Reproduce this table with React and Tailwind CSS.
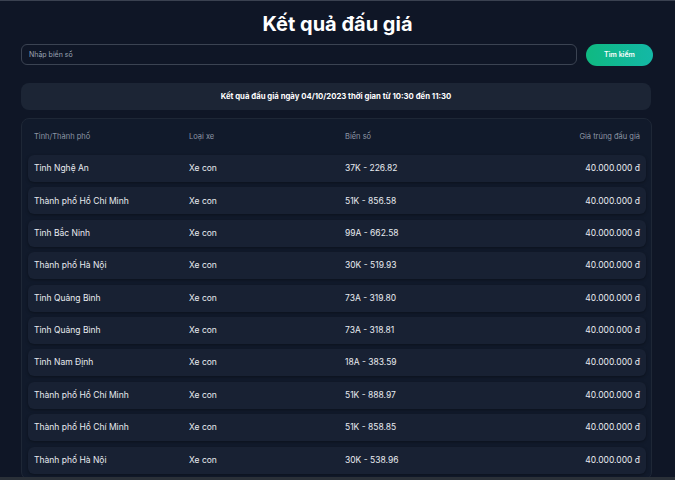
const ROWS = [
  ['Tỉnh Nghệ An', 'Xe con', '37K - 226.82'],
  ['Thành phố Hồ Chí Minh', 'Xe con', '51K - 856.58'],
  ['Tỉnh Bắc Ninh', 'Xe con', '99A - 662.58'],
  ['Thành phố Hà Nội', 'Xe con', '30K - 519.93'],
  ['Tỉnh Quảng Bình', 'Xe con', '73A - 319.80'],
  ['Tỉnh Quảng Bình', 'Xe con', '73A - 318.81'],
  ['Tỉnh Nam Định', 'Xe con', '18A - 383.59'],
  ['Thành phố Hồ Chí Minh', 'Xe con', '51K - 888.97'],
  ['Thành phố Hồ Chí Minh', 'Xe con', '51K - 858.85'],
  ['Thành phố Hà Nội', 'Xe con', '30K - 538.96'],
]

export default function App() {
  return (
    <div className="h-[480px] overflow-hidden bg-[#0f1626] border-t border-b-[3px] border-t-[#3a4150] border-b-[#2a3038] font-['Inter',sans-serif] text-white">
      <div className="px-[21px] pt-[10px]">
        <h1 className="text-center text-[20px] leading-[26px] font-bold">Kết quả đấu giá</h1>
        <div className="mt-[7px] flex gap-[9px] pr-[1px]">
          <input
            className="flex-1 h-[21px] rounded-[6px] border border-[#3b4352] bg-transparent px-[7px] text-[7px] text-white placeholder:text-[#9aa3b2] outline-none"
            placeholder="Nhập biển số"
          />
          <button className="w-[67px] h-[22px] rounded-full bg-gradient-to-r from-[#10b981] to-[#14b8a6] text-[7px] font-semibold text-white">Tìm kiếm</button>
        </div>
        <div className="mt-[17px] mr-[3px] h-[27px] rounded-[8px] bg-[#1c2535] flex items-center justify-center text-[7.75px] font-bold">
          Kết quả đấu giá ngày 04/10/2023 thời gian từ 10:30 đến 11:30
        </div>
        <div className="mt-[8px] mr-[2px] rounded-[8px] border border-[#1e2736] bg-[#111a2b] pl-[6px] pr-[5px]">
          <div className="grid grid-cols-[155px_156px_1fr_auto] items-center h-[36px] px-[6px] text-[7.5px] text-[#8d96a5]">
            <div>Tỉnh/Thành phố</div>
            <div>Loại xe</div>
            <div>Biển số</div>
            <div className="text-right">Giá trúng đấu giá</div>
          </div>
          <div>
            {ROWS.map((r, i) => (
              <div key={i} className="grid grid-cols-[155px_156px_1fr_auto] items-center h-[27px] mb-[5.4px] px-[6px] rounded-[6px] bg-[#182133] shadow-[0_1px_3px_rgba(0,0,0,0.35)] text-[8.5px] text-[#e8ebf0]">
                <div>{r[0]}</div>
                <div>{r[1]}</div>
                <div>{r[2]}</div>
                <div className="text-right">40.000.000 đ</div>
              </div>
            ))}
          </div>
        </div>
      </div>
    </div>
  )
}
